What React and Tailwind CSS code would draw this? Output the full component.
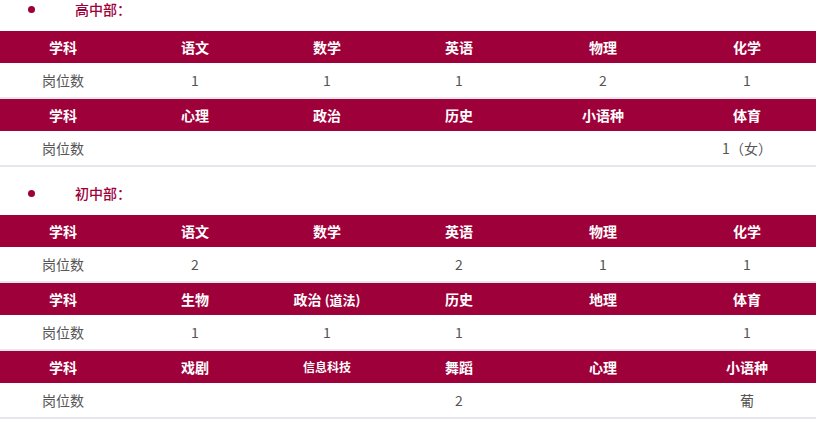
import React from "react";

const cols = "grid grid-cols-[126px_138px_126px_138px_150px_138px]";

const senior = [
  {
    head: ["学科", "语文", "数学", "英语", "物理", "化学"],
    row: ["岗位数", "1", "1", "1", "2", "1"],
  },
  {
    head: ["学科", "心理", "政治", "历史", "小语种", "体育"],
    row: ["岗位数", "", "", "", "", "1（女）"],
  },
];

const junior = [
  {
    head: ["学科", "语文", "数学", "英语", "物理", "化学"],
    row: ["岗位数", "2", "", "2", "1", "1"],
  },
  {
    head: ["学科", "生物", "政治（道法）", "历史", "地理", "体育"],
    row: ["岗位数", "1", "1", "1", "", "1"],
  },
  {
    head: ["学科", "戏剧", "信息科技", "舞蹈", "心理", "小语种"],
    row: ["岗位数", "", "", "2", "", "葡"],
  },
];

const Table = ({ head, row }) => (
  <div className="w-[816px] border-b-2 border-[#e9e5ec]">
    <div className={`${cols} h-[32px] bg-[#9e003a] text-white font-bold`}>
      {head.map((h, i) => (
        <div
          key={i}
          className={`flex items-center justify-center ${
            h === "信息科技" ? "text-[12px]" : "text-[14px]"
          }`}
        >
          {h === "政治（道法）" ? (
            <span>
              政治 <span className="text-[13px]">(道法)</span>
            </span>
          ) : (
            h
          )}
        </div>
      ))}
    </div>
    <div className={`${cols} h-[34px] bg-white text-[14px] text-[#555]`}>
      {row.map((c, i) => (
        <div key={i} className="flex items-center justify-center">
          {c}
        </div>
      ))}
    </div>
  </div>
);

const Title = ({ text, className }) => (
  <div className={`flex items-center h-[18px] ${className}`}>
    <span className="ml-[28px] w-[7px] h-[7px] rounded-full bg-[#9e003a]" />
    <span className="ml-[40px] text-[14px] leading-[18px] text-[#9e003a] font-medium">
      {text}
    </span>
  </div>
);

export default function App() {
  return (
    <div
      className="w-[819px] h-[423px] bg-white overflow-hidden"
      style={{ fontFamily: '"Noto Sans CJK SC", "Liberation Sans", sans-serif' }}
    >
      <Title text="高中部：" className="mb-[13px]" />
      {senior.map((t, i) => (
        <Table key={i} {...t} />
      ))}
      <Title text="初中部：" className="mt-[17px] mb-[13px]" />
      {junior.map((t, i) => (
        <Table key={i} {...t} />
      ))}
    </div>
  );
}
